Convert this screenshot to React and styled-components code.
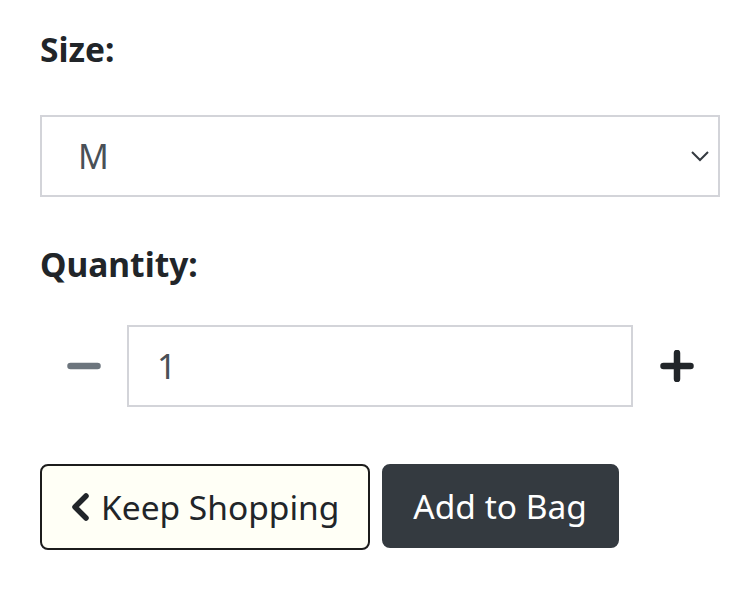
import React, { useState } from 'react'
import styled, { createGlobalStyle } from 'styled-components'

const GlobalStyle = createGlobalStyle`
  body {
    margin: 0;
    background: #fff;
    font-family: "Noto Sans", "Open Sans", sans-serif;
    color: #212529;
  }
`

const Page = styled.div`
  width: 680px;
  padding: 24px 20px 0 40px;
`

const Label = styled.label`
  display: block;
  font-size: 33.5px;
  font-weight: 700;
  line-height: 51px;
  margin-bottom: ${p => p.$gap || 40}px;
`

const SelectWrap = styled.div`
  position: relative;
  margin-bottom: 42px;
`

const Select = styled.select`
  appearance: none;
  display: block;
  width: 100%;
  height: 82px;
  box-sizing: border-box;
  border: 2px solid #d3d4d9;
  border-radius: 0;
  background: #fff;
  padding: 0 36px;
  font-family: inherit;
  font-size: 34px;
  color: #495057;
  outline: none;
`

const Chevron = styled.svg`
  position: absolute;
  right: 10px;
  top: 50%;
  transform: translateY(-50%);
  pointer-events: none;
`

const QtyRow = styled.div`
  display: flex;
  align-items: stretch;
  height: 82px;
  margin-bottom: 57px;
`

const StepButton = styled.button`
  width: 87px;
  flex: none;
  border: none;
  background: transparent;
  display: flex;
  align-items: center;
  justify-content: center;
  padding: 0;
  cursor: pointer;
`

const QtyInput = styled.input`
  flex: 1;
  min-width: 0;
  box-sizing: border-box;
  border: 2px solid #d3d4d9;
  padding: 0 28px;
  font-family: inherit;
  font-size: 34px;
  color: #495057;
  outline: none;
`

const Actions = styled.div`
  display: flex;
  gap: 12px;
  align-items: flex-start;
`

const Button = styled.button`
  display: flex;
  align-items: center;
  gap: 11px;
  box-sizing: border-box;
  height: ${p => (p.$dark ? 84 : 86)}px;
  padding: 0 ${p => (p.$dark ? 30 : 29)}px 0 ${p => (p.$dark ? 29 : 28)}px;
  border-radius: 8px;
  border: 2px solid ${p => (p.$dark ? '#343a40' : '#1c1c1c')};
  background: ${p => (p.$dark ? '#343a40' : '#fffff6')};
  color: ${p => (p.$dark ? '#fff' : '#212529')};
  font-family: inherit;
  font-size: 33.5px;
  cursor: pointer;
`

export default function App() {
  const [qty, setQty] = useState(1)
  return (
    <Page>
      <GlobalStyle />
      <Label>Size:</Label>
      <SelectWrap>
        <Select defaultValue="M">
          <option>S</option>
          <option>M</option>
          <option>L</option>
        </Select>
        <Chevron width="20" height="14" viewBox="0 0 20 14">
          <polyline points="2,3 10,11 18,3" fill="none" stroke="#343a40" strokeWidth="2" />
        </Chevron>
      </SelectWrap>

      <Label $gap={35}>Quantity:</Label>
      <QtyRow>
        <StepButton onClick={() => setQty(q => Math.max(1, q - 1))}>
          <svg width="34" height="8" viewBox="0 0 34 8">
            <line x1="3.5" y1="4" x2="30.5" y2="4" stroke="#6c757d" strokeWidth="6.5" strokeLinecap="round" />
          </svg>
        </StepButton>
        <QtyInput value={qty} onChange={e => setQty(e.target.value)} />
        <StepButton onClick={() => setQty(q => Number(q) + 1)}>
          <svg width="34" height="32" viewBox="0 0 34 32">
            <line x1="3.5" y1="16" x2="30.5" y2="16" stroke="#212529" strokeWidth="6.5" strokeLinecap="round" />
            <line x1="17" y1="3" x2="17" y2="29" stroke="#212529" strokeWidth="6.5" strokeLinecap="round" />
          </svg>
        </StepButton>
      </QtyRow>

      <Actions>
        <Button>
          <svg width="20" height="28" viewBox="0 0 20 28">
            <polyline points="16,3 5,14 16,25" fill="none" stroke="#212529" strokeWidth="5.5" strokeLinecap="round" strokeLinejoin="round" />
          </svg>
          Keep Shopping
        </Button>
        <Button $dark>Add to Bag</Button>
      </Actions>
    </Page>
  )
}
